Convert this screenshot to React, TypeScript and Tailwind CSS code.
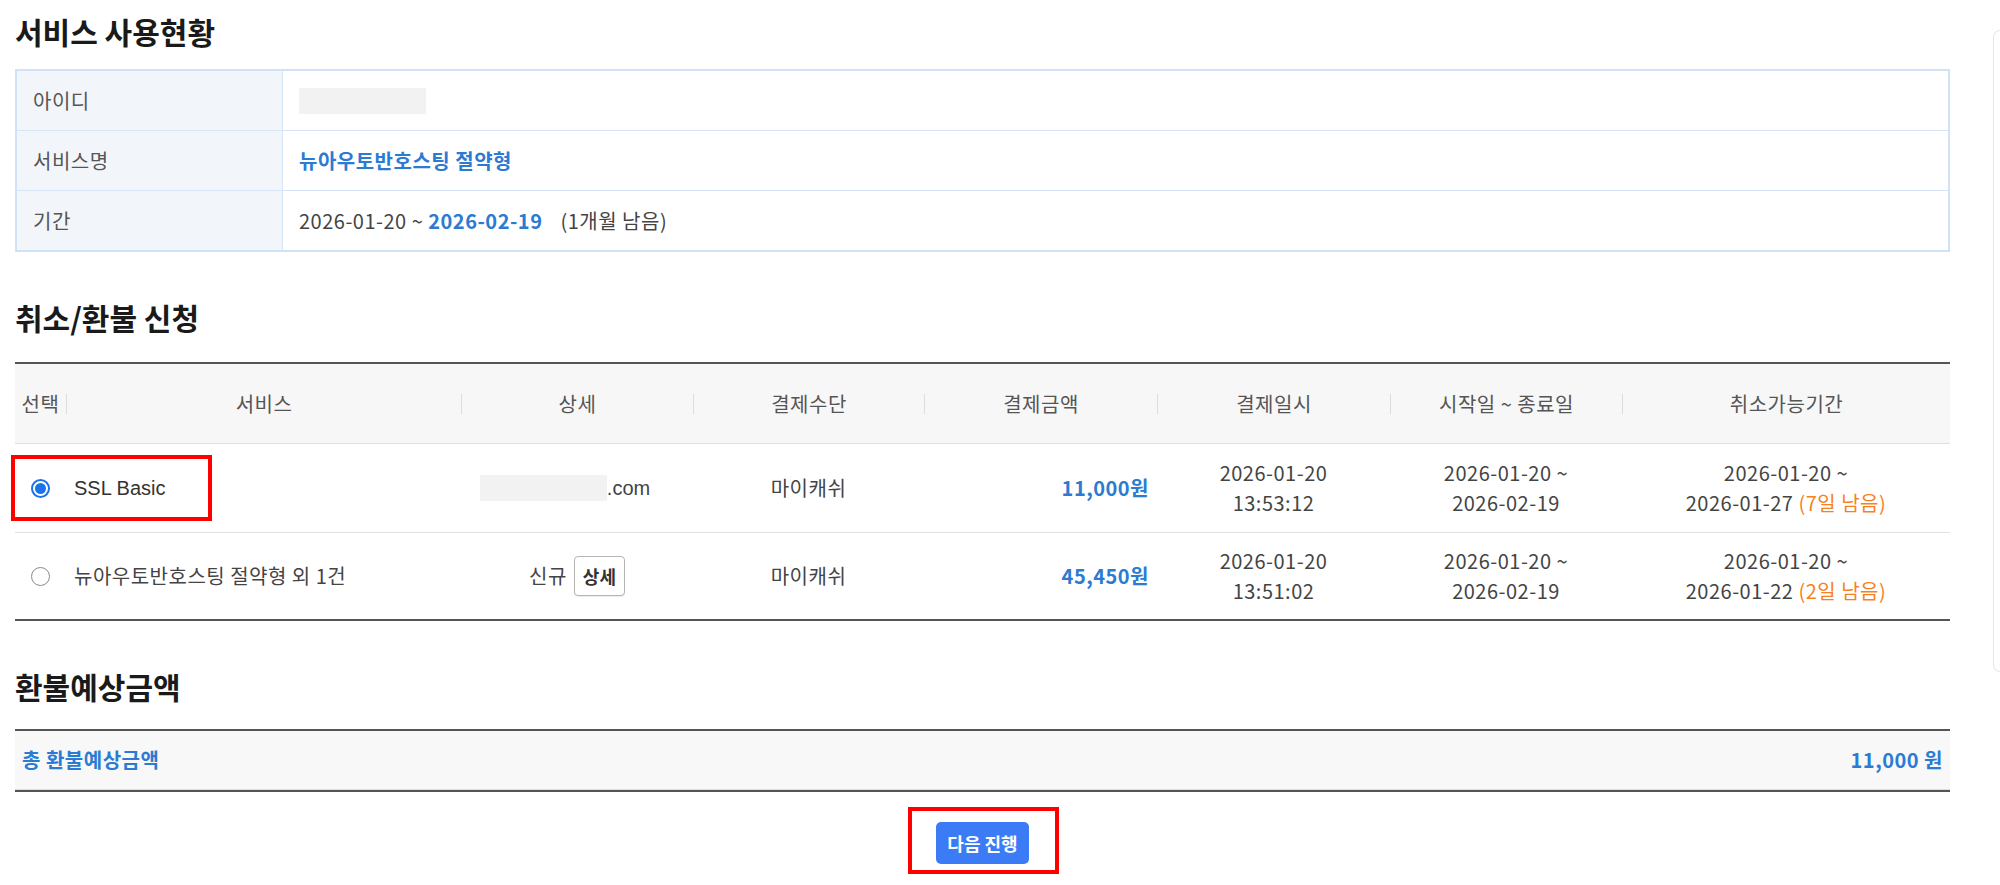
import React from "react";

const Sep = () => <span className="w-px h-[20px] bg-[#dcdcdc] shrink-0" />;

function Radio({ checked }: { checked?: boolean }) {
  return checked ? (
    <span className="w-[19px] h-[19px] rounded-full border-2 border-[#1a73e8] bg-white flex items-center justify-center">
      <span className="w-[11px] h-[11px] rounded-full bg-[#1a73e8]" />
    </span>
  ) : (
    <span className="w-[19px] h-[19px] rounded-full border-[1.5px] border-[#8a8a8a] bg-white" />
  );
}

function HeadCell({ label, first }: { label: string; first?: boolean }) {
  return (
    <div className="flex items-center h-full">
      {!first && <Sep />}
      <div className="flex-1 text-center">{label}</div>
    </div>
  );
}

export default function App() {
  const cols =
    "grid grid-cols-[51px_395px_232px_231px_233px_233px_232px_328px]";
  return (
    <div className="relative w-[2000px] h-[885px] bg-white flex font-['Noto_Sans_CJK_KR','Noto_Sans',sans-serif] text-[20px] tracking-[0.5px] text-[#444] overflow-hidden">
      <div className="w-[1950px] pl-[15px] flex flex-col">
        {/* Title 1 */}
        <div className="h-[64px] pb-[2px] flex items-center text-[30px] font-bold text-[#1a1a1a] leading-none tracking-normal">
          서비스 사용현황
        </div>
        <div className="mt-[5px] border-2 border-[#cfe2f8]">
          <div className="grid grid-cols-[266px_1fr] h-[59px]">
            <div className="bg-[#f2f6fa] border-r border-[#d6e6f8] flex items-center pl-[16px] text-[#555]">
              아이디
            </div>
            <div className="flex items-center pl-[16px]">
              <span className="w-[127px] h-[26px] bg-[#f2f2f2]" />
            </div>
          </div>
          <div className="grid grid-cols-[266px_1fr] h-[60px] border-t border-[#d6e6f8]">
            <div className="bg-[#f2f6fa] border-r border-[#d6e6f8] flex items-center pl-[16px] text-[#555]">
              서비스명
            </div>
            <div className="flex items-center pl-[16px] font-bold text-[#2b7bd3]">
              뉴아우토반호스팅 절약형
            </div>
          </div>
          <div className="grid grid-cols-[266px_1fr] h-[60px] border-t border-[#d6e6f8]">
            <div className="bg-[#f2f6fa] border-r border-[#d6e6f8] flex items-center pl-[16px] text-[#555]">
              기간
            </div>
            <div className="flex items-center pl-[16px]">
              <span>2026-01-20 ~&nbsp;</span>
              <span className="font-bold text-[#2b7bd3]">2026-02-19</span>
              <span className="ml-[18px]">(1개월 남음)</span>
            </div>
          </div>
        </div>

        {/* Title 2 */}
        <div className="h-[110px] pt-[20px] flex items-center text-[30px] font-bold text-[#1a1a1a] leading-none tracking-normal">
          취소/환불 신청
        </div>
        <div className="border-t-2 border-b-2 border-[#555]">
          <div className={`${cols} h-[80px] bg-[#f7f7f7] border-b border-[#e0e0e0] text-[#555]`}>
            <HeadCell label="선택" first />
            <HeadCell label="서비스" />
            <HeadCell label="상세" />
            <HeadCell label="결제수단" />
            <HeadCell label="결제금액" />
            <HeadCell label="결제일시" />
            <HeadCell label="시작일 ~ 종료일" />
            <HeadCell label="취소가능기간" />
          </div>
          {/* Row 1 */}
          <div className={`${cols} h-[89px] border-b border-[#e0e0e0] items-center leading-[30px]`}>
            <div className="flex justify-center">
              <Radio checked />
            </div>
            <div className="pl-[8px] font-['Liberation_Sans',sans-serif] tracking-normal text-[#333]">SSL Basic</div>
            <div className="flex items-center justify-center pr-[24px]">
              <span className="w-[127px] h-[26px] bg-[#f2f2f2]" />
              <span className="font-['Liberation_Sans',sans-serif] tracking-normal">.com</span>
            </div>
            <div className="text-center">마이캐쉬</div>
            <div className="text-right pr-[8px] font-bold text-[#2b7bd3]">11,000원</div>
            <div className="text-center">
              2026-01-20
              <br />
              13:53:12
            </div>
            <div className="text-center">
              2026-01-20 ~
              <br />
              2026-02-19
            </div>
            <div className="text-center">
              2026-01-20 ~
              <br />
              2026-01-27 <span className="text-[#f7811f]">(7일 남음)</span>
            </div>
          </div>
          {/* Row 2 */}
          <div className={`${cols} h-[86px] items-center leading-[30px]`}>
            <div className="flex justify-center">
              <Radio />
            </div>
            <div className="pl-[8px] whitespace-nowrap">뉴아우토반호스팅 절약형 외 1건</div>
            <div className="flex items-center justify-center gap-[7px]">
              <span>신규</span>
              <span className="w-[51px] h-[40px] border border-[#b5b5b5] rounded-[4px] bg-white flex items-center justify-center text-[18px] font-bold text-[#333] tracking-normal shadow-[0_1px_1px_rgba(0,0,0,0.08)]">
                상세
              </span>
            </div>
            <div className="text-center">마이캐쉬</div>
            <div className="text-right pr-[8px] font-bold text-[#2b7bd3]">45,450원</div>
            <div className="text-center">
              2026-01-20
              <br />
              13:51:02
            </div>
            <div className="text-center">
              2026-01-20 ~
              <br />
              2026-02-19
            </div>
            <div className="text-center">
              2026-01-20 ~
              <br />
              2026-01-22 <span className="text-[#f7811f]">(2일 남음)</span>
            </div>
          </div>
        </div>

        {/* Title 3 */}
        <div className="h-[108px] pt-[22px] flex items-center text-[30px] font-bold text-[#1a1a1a] leading-none tracking-normal">
          환불예상금액
        </div>
        <div className="border-t-2 border-b-2 border-[#555]">
          <div className="h-[59px] bg-[#f8f8f8] border-b border-[#dedede] flex items-center justify-between pl-[7px] pr-[7px] font-bold text-[#2b7bd3]">
            <span>총 환불예상금액</span>
            <span>11,000 원</span>
          </div>
        </div>

        <div className="mt-[30px] flex justify-center">
          <button className="w-[93px] h-[42px] rounded-[5px] bg-[#3b7cf6] text-white text-[18px] font-bold tracking-normal">
            다음 진행
          </button>
        </div>
      </div>

      {/* right faint panel edge */}
      <div className="ml-[43px] mt-[30px] w-[7px] h-[642px] border-l border-t border-b border-[#e6e6e6] rounded-l-[8px]" />

      {/* red annotation boxes */}
      <div className="absolute left-[11px] top-[455px] w-[201px] h-[66px] border-[4px] border-[#ff0000]" />
      <div className="absolute left-[908px] top-[807px] w-[151px] h-[67px] border-[4px] border-[#ff0000]" />
    </div>
  );
}
